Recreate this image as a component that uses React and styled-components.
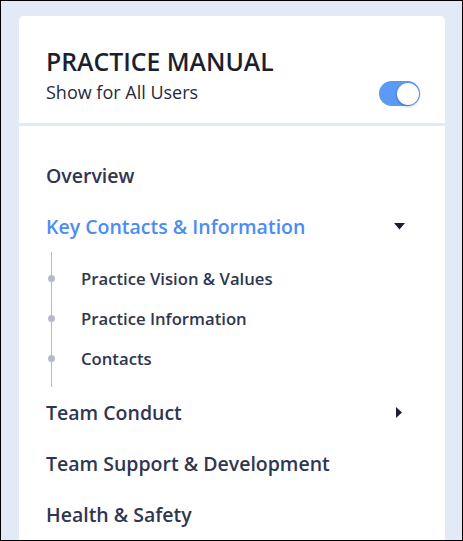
import React from 'react'
import styled, { createGlobalStyle } from 'styled-components'

const GlobalStyle = createGlobalStyle`
  html, body {
    margin: 0;
    padding: 0;
  }
  body {
    font-family: 'Open Sans', 'Liberation Sans', sans-serif;
  }
`

const Frame = styled.div`
  box-sizing: border-box;
  width: 463px;
  height: 541px;
  border: 1px solid #000;
  background: #e3eaf7;
  padding: 15px 17px 0 18px;
  overflow: hidden;
`

const Card = styled.div`
  background: #fff;
  border-radius: 5px 5px 0 0;
  height: 600px;
`

const Header = styled.div`
  padding: 28px 25px 17px 27px;
  border-bottom: 3px solid #e3eaf7;
`

const Title = styled.h1`
  margin: 0;
  font-size: 24.8px;
  line-height: 34px;
  font-weight: 600;
  color: #1c1f30;
`

const SubRow = styled.div`
  display: flex;
  align-items: center;
  justify-content: space-between;
  margin-top: -1px;
`

const SubLabel = styled.span`
  font-size: 18px;
  line-height: 24px;
  color: #262b40;
`

const Toggle = styled.div`
  position: relative;
  width: 41px;
  height: 25px;
  border-radius: 13px;
  background: #5b9bf6;
  margin-top: 4px;
`

const Knob = styled.div`
  position: absolute;
  top: 2px;
  right: 1px;
  width: 22px;
  height: 22px;
  border-radius: 50%;
  background: #fff;
  box-shadow: 0 1px 3px rgba(20, 40, 90, 0.45);
`

const Nav = styled.nav`
  padding: 24px 40px 0 27px;
`

const Item = styled.div`
  display: flex;
  align-items: center;
  justify-content: space-between;
  height: 51px;
  font-size: 19.5px;
  font-weight: 600;
  color: ${p => (p.active ? '#4b8cf5' : '#30364f')};
`

const SubList = styled.div`
  position: relative;
  margin: 0 0 0 5px;
  padding: 6px 0 9px 29px;
  border-left: 1.5px solid #b6bace;
`

const SubItem = styled.div`
  position: relative;
  height: 40px;
  display: flex;
  align-items: center;
  font-size: 16.7px;
  font-weight: 600;
  color: #30364f;

  &::before {
    content: '';
    position: absolute;
    left: -33.5px;
    top: 17px;
    width: 7px;
    height: 7px;
    border-radius: 50%;
    background: #b6bace;
  }
`

const CaretDown = () => (
  <svg width="11" height="7" viewBox="0 0 11 7">
    <path d="M0 0 L11 0 L5.5 6.5 Z" fill="#1c1f2e" />
  </svg>
)

const CaretRight = () => (
  <svg width="6" height="11" viewBox="0 0 6 11" style={{ marginRight: '3px' }}>
    <path d="M0 0 L6 5.5 L0 11 Z" fill="#1c1f2e" />
  </svg>
)

const subs = ['Practice Vision & Values', 'Practice Information', 'Contacts']

export default function App() {
  return (
    <>
      <GlobalStyle />
      <Frame>
        <Card>
          <Header>
            <Title>PRACTICE MANUAL</Title>
            <SubRow>
              <SubLabel>Show for All Users</SubLabel>
              <Toggle>
                <Knob />
              </Toggle>
            </SubRow>
          </Header>
          <Nav>
            <Item>Overview</Item>
            <Item active>
              Key Contacts &amp; Information
              <CaretDown />
            </Item>
            <SubList>
              {subs.map(s => (
                <SubItem key={s}>{s}</SubItem>
              ))}
            </SubList>
            <Item>
              Team Conduct
              <CaretRight />
            </Item>
            <Item>Team Support &amp; Development</Item>
            <Item>Health &amp; Safety</Item>
          </Nav>
        </Card>
      </Frame>
    </>
  )
}
